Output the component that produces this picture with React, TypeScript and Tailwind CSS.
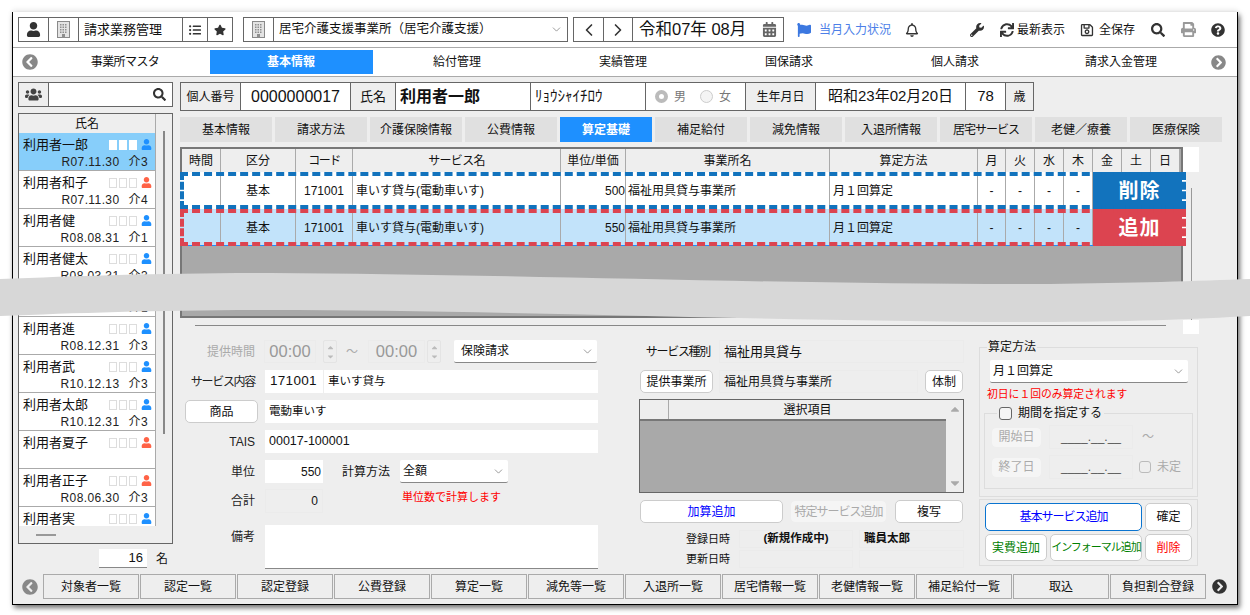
import React from "react";
import {
  FaUser, FaListUl, FaStar, FaUsers, FaSearch,
  FaCalendarAlt, FaFlag, FaRegBell, FaWrench, FaSync, FaRegSave, FaPrint, FaQuestionCircle,
  FaChevronCircleLeft, FaChevronCircleRight, FaCaretUp, FaCaretDown,
} from "react-icons/fa";
import { ChevronDown, ChevronLeft, ChevronRight } from "lucide-react";

const nav = ["事業所マスタ", "基本情報", "給付管理", "実績管理", "国保請求", "個人請求", "請求入金管理"];
const tabs = ["基本情報", "請求方法", "介護保険情報", "公費情報", "算定基礎", "補足給付", "減免情報", "入退所情報", "居宅サービス", "老健／療養", "医療保険"];
const bottom = ["対象者一覧", "認定一覧", "認定登録", "公費登録", "算定一覧", "減免等一覧", "入退所一覧", "居宅情報一覧", "老健情報一覧", "補足給付一覧", "取込", "負担割合登録"];
const cols: [string, string][] = [
  ["時間", "w-[39px]"], ["区分", "w-[75px]"], ["コード", "w-[57px] tracking-[-1.5px]"], ["サービス名", "w-[208px] tracking-[-0.7px]"], ["単位/単価", "w-[65px]"],
  ["事業所名", "w-[204px]"], ["算定方法", "w-[148px]"], ["月", "w-[28px]"], ["火", "w-[29px]"], ["水", "w-[29px]"], ["木", "w-[29px]"],
  ["金", "w-[29px]"], ["土", "w-[29px]"], ["日", "w-[29px]"],
];
type P = { n: string; d: string; k: string; red?: boolean; h?: string; sel?: boolean };
const people: P[] = [
  { n: "利用者一郎", d: "R07.11.30", k: "介3", sel: true },
  { n: "利用者和子", d: "R07.11.30", k: "介4", red: true },
  { n: "利用者健", d: "R08.08.31", k: "介1" },
  { n: "利用者健太", d: "R08.03.31", k: "介3" },
  { n: "", d: "R08.03.31", k: "介1", h: "h-[32px]" },
  { n: "利用者進", d: "R08.12.31", k: "介3" },
  { n: "利用者武", d: "R10.12.13", k: "介3" },
  { n: "利用者太郎", d: "R10.12.31", k: "介3" },
  { n: "利用者夏子", d: "", k: "", red: true },
  { n: "利用者正子", d: "R08.06.30", k: "介3", red: true },
  { n: "利用者実", d: "", k: "" },
];

function Building() {
  return (
    <svg width="13" height="17" viewBox="0 0 13 17">
      <rect x="0.5" y="0.5" width="12" height="16" fill="#e4e4e4" stroke="#8a8a8a" />
      {[3, 5.5, 8, 10.5].map((y) =>
        [3, 5.5, 8].map((x) => <rect key={`${x}-${y}`} x={x} y={y} width="1.5" height="1.5" fill="#8f8f8f" />)
      )}
      <rect x="5" y="13" width="3" height="3.5" fill="#8f8f8f" />
    </svg>
  );
}

function Cell({ w, children, last }: { w: string; children: React.ReactNode; last?: boolean }) {
  return <div className={`${w} h-full flex items-center justify-center shrink-0 ${last ? "" : "border-r border-[#666]"}`}>{children}</div>;
}

function Row({ price, bg, color, label, border, line }: { price: string; bg: string; color: string; label: string; border: string; line?: boolean }) {
  const c = "h-full flex items-center shrink-0 border-r border-[#aaa]";
  return (
    <div className={`relative h-[37px] w-[1006px] flex text-[12px] text-[#111] ${bg}`}>
      <div className={`${c} w-[41px]`} />
      <div className={`${c} w-[75px] justify-center`}>基本</div>
      <div className={`${c} w-[57px] justify-center`}>171001</div>
      <div className={`${c} w-[208px] pl-[3px]`}>車いす貸与(電動車いす)</div>
      <div className={`${c} w-[65px] justify-end`}>{price}</div>
      <div className={`${c} w-[204px] pl-[2px]`}>福祉用具貸与事業所</div>
      <div className={`${c} w-[148px] pl-[3px]`}>月１回算定</div>
      {[28, 29, 29, 29].map((w, i) => (
        <div key={i} className={`${c} justify-center`} style={{ width: w }}>-</div>
      ))}
      {line && <div className="absolute left-0 right-0 bottom-0 h-[1px] bg-[#1e90ff]" />}
      <div className="absolute right-0 top-0 bottom-0 w-[4px] bg-white" />
      <div className={`absolute right-[4px] top-0 bottom-0 w-[89px] flex items-center justify-center text-white font-bold text-[20px] tracking-[1px] pl-[4px] ${color}`}>{label}</div>
      <div className={`absolute inset-0 border-4 border-dashed ${border}`} />
    </div>
  );
}

function Btn({ w, h = "h-full", text = "text-[#111]", cls = "", children }: { w: string; h?: string; text?: string; cls?: string; children: React.ReactNode }) {
  return <div className={`${w} ${h} ${text} ${cls} shrink-0 rounded-[5px] border border-[#ccc] bg-white flex items-center justify-center text-[12px]`}>{children}</div>;
}

function Label({ children, cls = "" }: { children: React.ReactNode; cls?: string }) {
  return <div className={`w-[75px] shrink-0 text-right text-[12px] text-[#222] whitespace-nowrap ${cls}`}>{children}</div>;
}

function Select({ w, text, h = "h-[23px]", pl = "pl-[3px]" }: { w: string; text: string; h?: string; pl?: string }) {
  return (
    <div className={`${w} ${h} ${pl} shrink-0 bg-white border-b border-[#888] rounded-[2px] flex items-center justify-between pr-[3px] text-[12px] text-[#111]`}>
      <span>{text}</span>
      <ChevronDown size={13} strokeWidth={1.2} className="text-[#666]" />
    </div>
  );
}

function Spin() {
  return (
    <div className="w-[14px] h-[23px] shrink-0 border border-[#e4e4e4] rounded-[2px] flex flex-col items-center justify-center text-[#bbb] text-[9px] leading-none">
      <FaCaretUp />
      <FaCaretDown />
    </div>
  );
}

const ro = "bg-[#eeeeee] border border-[#ebebeb]";

export default function App() {
  return (
    <div className="relative w-[1250px] h-[615px] overflow-hidden bg-white pl-[12px] pt-[12px] [font-family:'Liberation_Sans','Noto_Sans_CJK_JP',sans-serif]">
      <div className="w-[1226px] h-[593px] flex flex-col border-x border-b border-black bg-[#eeeeee] shadow-[2px_3px_5px_rgba(0,0,0,0.55),0_-3px_5px_rgba(0,0,0,0.06)]">
        {/* header */}
        <div className="h-[35px] shrink-0 bg-white flex items-start pl-[5px] pt-[5px] text-[#111]">
          <div className="w-[215px] h-[25px] flex border border-[#666]">
            <Cell w="w-[30px]"><FaUser size={15} className="text-[#333]" /></Cell>
            <Cell w="w-[30px]"><Building /></Cell>
            <div className="flex-1 h-full flex items-center pl-[5px] text-[13px] border-r border-[#666]">請求業務管理</div>
            <Cell w="w-[25px]"><FaListUl size={12} className="text-[#333]" /></Cell>
            <Cell w="w-[24px]" last><FaStar size={12} className="text-[#333]" /></Cell>
          </div>
          <div className="ml-[10px] w-[325px] h-[25px] flex border border-[#666]">
            <Cell w="w-[30px]"><Building /></Cell>
            <div className="flex-1 h-full flex items-center justify-between pl-[5px] pr-[4px] text-[12.5px]">
              <span>居宅介護支援事業所（居宅介護支援）</span>
              <ChevronDown size={13} strokeWidth={1.2} className="text-[#666]" />
            </div>
          </div>
          <div className="ml-[5px] w-[211px] h-[25px] flex border border-[#666]">
            <Cell w="w-[30px]"><ChevronLeft size={20} strokeWidth={2} className="text-[#333]" /></Cell>
            <Cell w="w-[29px]"><ChevronRight size={20} strokeWidth={2} className="text-[#333]" /></Cell>
            <div className="flex-1 h-full flex items-center justify-between pl-[6px] pr-[6px]">
              <span className="text-[16.5px] whitespace-pre">令和07年 08月</span>
              <FaCalendarAlt size={15} className="text-[#666]" />
            </div>
          </div>
          <div className="flex items-center h-[25px]">
            <FaFlag size={14} className="ml-[13px] text-[#3c78e0]" />
            <span className="ml-[8px] w-[72px] text-[12px] text-[#4d7fe8] whitespace-nowrap">当月入力状況</span>
            <FaRegBell size={14} className="ml-[14px] text-[#333]" />
            <FaWrench size={14} className="ml-[51px] text-[#333]" />
            <FaSync size={14} className="ml-[16px] text-[#333]" />
            <span className="ml-[3px] w-[48px] text-[12px] whitespace-nowrap">最新表示</span>
            <FaRegSave size={14} className="ml-[15px] text-[#333]" />
            <span className="ml-[5px] w-[36px] text-[12px] whitespace-nowrap">全保存</span>
            <FaSearch size={14} className="ml-[16px] text-[#333]" />
            <FaPrint size={15} className="ml-[16px] text-[#999]" />
            <FaQuestionCircle size={14} className="ml-[15px] text-[#333]" />
          </div>
        </div>
        {/* nav */}
        <div className="h-[30px] shrink-0 bg-white border-y border-[#aaa] flex items-center text-[12px] text-[#111]">
          <FaChevronCircleLeft size={16} className="ml-[9px] text-[#888]" />
          <div className="ml-[4px] flex h-[24px]">
            {nav.map((t, i) => (
              <div key={t} className={`w-[166px] h-full flex items-center justify-center ${t.length === 6 && i === 0 ? "tracking-[-0.6px]" : ""} ${i === 1 ? "bg-[#1e90ff] text-white font-bold mx-[1.5px] !w-[163px]" : ""}`}>{t}</div>
            ))}
          </div>
          <FaChevronCircleRight size={15} className="ml-[7px] text-[#888]" />
        </div>
        {/* main */}
        <div className="flex-1 flex pl-[5px] pt-[5px] text-[12px] text-[#111] min-h-0">
          {/* left */}
          <div className="w-[155px] shrink-0 flex flex-col">
            <div className="h-[25px] flex border border-[#666] bg-white shrink-0">
              <div className="w-[30px] h-full border-r border-[#666] bg-[#eeeeee] flex items-center justify-center"><FaUsers size={17} className="text-[#444]" /></div>
              <div className="flex-1 flex items-center justify-end pr-[6px]"><FaSearch size={13} className="text-[#333]" /></div>
            </div>
            <div className="mt-[6px] h-[431px] flex flex-col border border-[#666] bg-[#eeeeee] shrink-0">
              <div className="flex flex-1 min-h-0">
                <div className="w-[136px] shrink-0 flex flex-col overflow-hidden">
                  <div className="h-[19px] shrink-0 flex items-center justify-center bg-[#eeeeee]">氏名</div>
                  {people.map((p, i) => (
                    <div key={i} className={`${p.h ?? "h-[38px]"} shrink-0 flex flex-col border-b border-[#aaa] ${p.sel ? "bg-[#87cefa]" : "bg-white"} ${p.h ? "justify-end" : ""} pl-[4px] pr-[3px]`}>
                      {p.n && (
                        <div className="h-[23px] flex items-center shrink-0">
                          <span className="text-[13px] whitespace-nowrap flex-1">{p.n}</span>
                          <div className="flex gap-[1.5px] mr-[4px]">
                            {[0, 1, 2].map((k) => (
                              <span key={k} className={`block w-[8.5px] h-[10px] border ${p.sel ? "bg-white border-white" : "border-[#ddd]"}`} />
                            ))}
                          </div>
                          <FaUser size={11} className={p.red ? "text-[#ff6347]" : "text-[#1e90ff]"} />
                        </div>
                      )}
                      {p.d && (
                        <div className="-mt-[2px] flex justify-end pr-[4px] whitespace-pre text-[12px] leading-[16px] tracking-[0.4px] text-[#222]">
                          <span>{p.d}</span>
                          <span className="ml-[9px]">{p.k}</span>
                        </div>
                      )}
                    </div>
                  ))}
                </div>
                <div className="flex-1 border-l border-[#aaa] flex justify-center pt-[17px] pb-[94px]">
                  <div className="w-[2px] h-[303px] bg-[#888]" />
                </div>
              </div>
              <div className="h-[17px] shrink-0 flex items-center pl-[17px]">
                <div className="w-[20px] h-[2px] bg-[#999]" />
              </div>
            </div>
            <div className="mt-[5px] flex items-center shrink-0 pl-[81px]">
              <div className="w-[48px] h-[19px] bg-white border-b border-[#888] flex items-center justify-end pr-[4px] text-[13px]">16</div>
              <span className="ml-[9px] text-[12px]">名</span>
            </div>
          </div>
          {/* right */}
          <div className="ml-[7px] flex-1 flex flex-col min-w-0">
            <div className="h-[29px] w-[854px] shrink-0 flex border border-[#666] bg-white">
              <div className="w-[60px] h-full bg-[#eeeeee] border-r border-[#666] flex items-center justify-center">個人番号</div>
              <div className="w-[110px] h-full border-r border-[#666] flex items-center justify-center text-[16px]">0000000017</div>
              <div className="w-[45px] h-full bg-[#eeeeee] border-r border-[#666] flex items-center justify-center text-[13px]">氏名</div>
              <div className="w-[135px] h-full border-r border-[#666] flex items-center pl-[4px] text-[16px] font-bold">利用者一郎</div>
              <div className="w-[115px] h-full border-r border-[#666] flex items-center pl-[4px] text-[15px]">ﾘｮｳｼｬｲﾁﾛｳ</div>
              <div className="w-[100px] h-full border-r border-[#666] flex items-center pl-[9px] text-[#777]">
                <span className="w-[13px] h-[13px] rounded-full border-[4px] border-[#bbb] bg-white" />
                <span className="ml-[6px]">男</span>
                <span className="ml-[14px] w-[13px] h-[13px] rounded-full border border-[#ccc] bg-[#f4f4f4]" />
                <span className="ml-[6px]">女</span>
              </div>
              <div className="w-[70px] h-full bg-[#eeeeee] border-r border-[#666] flex items-center justify-center">生年月日</div>
              <div className="w-[150px] h-full border-r border-[#666] flex items-center justify-center text-[15px]">昭和23年02月20日</div>
              <div className="w-[40px] h-full border-r border-[#666] flex items-center justify-center text-[15px]">78</div>
              <div className="flex-1 h-full bg-[#eeeeee] flex items-center justify-center">歳</div>
            </div>
            <div className="mt-[6px] h-[25px] shrink-0 flex gap-[3px]">
              {tabs.map((t, i) => (
                <div key={t} className={`w-[92px] h-full flex items-center justify-center whitespace-nowrap ${t === "居宅サービス" ? "tracking-[-1px]" : ""} ${i === 4 ? "bg-[#1e90ff] text-white font-bold" : "bg-[#e0e0e0]"}`}>{t}</div>
              ))}
            </div>
            {/* table block */}
            <div className="mt-[5px] h-[187px] shrink-0 flex">
              <div className="w-[1003px] shrink-0 flex flex-col">
                <div className="h-[171px] border-2 border-[#777] bg-[#a9a9a9] shrink-0">
                  <div className="h-[23px] flex">
                    {cols.map(([t, w]) => (
                      <div key={t} className={`${w} h-full shrink-0 bg-[#eeeeee] border-r border-[#aaa] flex items-center justify-center whitespace-nowrap`}>{t}</div>
                    ))}
                  </div>
                  <div className="relative z-10 -ml-[2px]">
                    <Row price="500" bg="bg-white" color="bg-[#1273bd]" label="削除" border="border-[#1273bd]" />
                    <Row price="550" bg="bg-[#c2e3fa]" color="bg-[#dc4450]" label="追加" border="border-[#dc4450]" line />
                  </div>
                </div>
                <div className="mt-[7px] ml-[15px] w-[971px] h-[1px] bg-[#888] shrink-0" />
              </div>
              <div className="w-[16px] shrink-0 flex flex-col items-center">
                <div className="w-full h-[25px] bg-white shrink-0" />
                <div className="mt-[16px] flex-1 w-[1px] bg-[#999]" />
                <div className="w-full h-[14px] bg-white shrink-0" />
              </div>
            </div>
            {/* form */}
            <div className="mt-[6px] flex-1 flex min-h-0">
              <div className="w-[418px] shrink-0 flex flex-col">
                <div className="h-[23px] flex items-center">
                  <Label cls="text-[#aaa]">提供時間</Label>
                  <div className={`ml-[9px] w-[52px] h-[23px] shrink-0 flex items-center justify-center text-[16.5px] text-[#999] ${ro}`}>00:00</div>
                  <div className="ml-[7px]"><Spin /></div>
                  <span className="ml-[9px] w-[22px] text-[#aaa] text-[12px]">～</span>
                  <div className="w-[57px] h-[23px] shrink-0 flex items-center justify-center text-[16.5px] text-[#999] border border-[#ebebeb]">00:00</div>
                  <div className="ml-[2px]"><Spin /></div>
                  <div className="ml-[13px]"><Select w="w-[143px]" text="保険請求" pl="pl-[7px]" /></div>
                </div>
                <div className="mt-[7px] h-[23px] flex items-center">
                  <Label cls="tracking-[-1.3px]">サービス内容</Label>
                  <div className="ml-[10px] w-[58px] h-full bg-white flex items-center pl-[5px] text-[13.5px] tracking-[0.3px]">171001</div>
                  <div className="ml-[1px] w-[274px] h-full bg-white flex items-center pl-[4px] text-[11.5px]">車いす貸与</div>
                </div>
                <div className="mt-[7px] h-[23px] flex items-center">
                  <div className="ml-[5px]"><Btn w="w-[73px]" h="h-[23px]">商品</Btn></div>
                  <div className="ml-[7px] w-[333px] h-full bg-white flex items-center pl-[4px] text-[11.5px]">電動車いす</div>
                </div>
                <div className="mt-[7px] h-[23px] flex items-center">
                  <Label>TAIS</Label>
                  <div className="ml-[10px] w-[333px] h-full bg-white flex items-center pl-[4px] text-[12.5px]">00017-100001</div>
                </div>
                <div className="mt-[7px] h-[23px] flex items-center">
                  <Label>単位</Label>
                  <div className="ml-[10px] w-[58px] h-full bg-white flex items-center justify-end pr-[2px]">550</div>
                  <div className="ml-[19px] w-[48px] whitespace-nowrap">計算方法</div>
                  <div className="ml-[10px]"><Select w="w-[108px]" text="全額" /></div>
                </div>
                <div className="mt-[6px] h-[24px] flex items-center">
                  <Label>合計</Label>
                  <div className={`ml-[10px] w-[58px] h-full flex items-center justify-end pr-[4px] ${ro}`}>0</div>
                  <div className="ml-[79px] mb-[8px] text-[11px] text-[#ff0000] whitespace-nowrap">単位数で計算します</div>
                </div>
                <div className="mt-[12px] h-[44px] flex">
                  <Label cls="pt-[3px]">備考</Label>
                  <div className="ml-[10px] w-[333px] h-full bg-white border-b border-[#888]" />
                </div>
              </div>
              <div className="ml-[41px] w-[325px] shrink-0 flex flex-col">
                <div className="h-[23px] flex items-center">
                  <div className="w-[71px] text-right whitespace-nowrap tracking-[-1.3px]">サービス種別</div>
                  <div className={`ml-[9px] w-[245px] h-full flex items-center pl-[4px] text-[13px] ${ro}`}>福祉用具貸与</div>
                </div>
                <div className="mt-[7px] h-[23px] flex items-center">
                  <div className="ml-[1px]"><Btn w="w-[73px]" h="h-[23px]">提供事業所</Btn></div>
                  <div className={`ml-[6px] w-[199px] h-full flex items-center pl-[4px] ${ro}`}>福祉用具貸与事業所</div>
                  <div className="ml-[7px]"><Btn w="w-[38px]" h="h-[23px]">体制</Btn></div>
                </div>
                <div className="mt-[6px] h-[94px] flex border border-[#666] bg-[#a9a9a9]">
                  <div className="flex-1 flex flex-col">
                    <div className="h-[21px] flex bg-[#eeeeee] border-b-2 border-[#777]">
                      <div className="w-[29px] border-r border-[#aaa]" />
                      <div className="flex-1 flex items-center justify-center">選択項目</div>
                    </div>
                  </div>
                  <div className="w-[17px] bg-[#eeeeee] flex flex-col items-center justify-between py-[2px] text-[#aaa] text-[14px]">
                    <FaCaretUp />
                    <FaCaretDown />
                  </div>
                </div>
                <div className="mt-[7px] h-[23px] flex items-center">
                  <div className="ml-[1px]"><Btn w="w-[143px]" h="h-[23px]" text="text-[#0000ff]">加算追加</Btn></div>
                  <div className="ml-[7px]"><Btn w="w-[97px]" h="h-[23px]" text="text-[#aaa]" cls="!bg-[#f5f5f5] !border-[#eee] tracking-[-1px] whitespace-nowrap">特定サービス追加</Btn></div>
                  <div className="ml-[8px]"><Btn w="w-[68px]" h="h-[23px]">複写</Btn></div>
                </div>
                <div className="mt-[7px] h-[18px] flex items-center">
                  <div className="w-[91px] text-right text-[11px]">登録日時</div>
                  <div className={`ml-[9px] w-[114px] h-full flex items-center justify-center font-bold text-[11.5px] ${ro}`}>(新規作成中)</div>
                  <div className={`ml-[6px] w-[105px] h-full flex items-center pl-[4px] font-bold text-[11.5px] ${ro}`}>職員太郎</div>
                </div>
                <div className="mt-[2px] h-[18px] flex items-center">
                  <div className="w-[91px] text-right text-[11px]">更新日時</div>
                  <div className={`ml-[9px] w-[114px] h-full ${ro}`} />
                  <div className={`ml-[6px] w-[105px] h-full ${ro}`} />
                </div>
              </div>
              <div className="ml-[15px] w-[219px] shrink-0 flex flex-col">
                <fieldset className="border border-[#ddd] h-[157px] shrink-0">
                  <legend className="ml-[7px] px-[1px] text-[12px] leading-[14px]">算定方法</legend>
                  <div className="mt-[6px] ml-[10px]"><Select w="w-[198px]" text="月１回算定" /></div>
                  <div className="ml-[7px] h-[22px] flex items-center text-[#ff0000] text-[10.8px] whitespace-nowrap">初日に１回のみ算定されます</div>
                  <fieldset className="ml-[4px] w-[209px] h-[84px] border border-[#ddd]">
                    <legend className="ml-[12px] px-[2px] flex items-center h-[16px]">
                      <span className="w-[13px] h-[13px] rounded-[3px] border border-[#666] bg-[#f5f5f5]" />
                      <span className="ml-[6px]">期間を指定する</span>
                    </legend>
                    <div className="mt-[4px] flex items-center ml-[6px] h-[24px]">
                      <Btn w="w-[51px]" h="h-[21px]" text="text-[#aaa]" cls="!bg-[#f5f5f5] !border-[#eee]">開始日</Btn>
                      <div className={`ml-[7px] w-[84px] h-full flex items-center justify-center text-[#555] ${ro}`}>____.__.__</div>
                      <span className="ml-[9px] text-[#aaa] text-[12px]">～</span>
                    </div>
                    <div className="mt-[6px] flex items-center ml-[6px] h-[24px]">
                      <Btn w="w-[51px]" h="h-[21px]" text="text-[#aaa]" cls="!bg-[#f5f5f5] !border-[#eee]">終了日</Btn>
                      <div className={`ml-[7px] w-[84px] h-full flex items-center justify-center text-[#555] ${ro}`}>____.__.__</div>
                      <span className="ml-[6px] w-[12px] h-[12px] rounded-[3px] border border-[#bbb]" />
                      <span className="ml-[6px] text-[#aaa]">未定</span>
                    </div>
                  </fieldset>
                </fieldset>
                <div className="mt-[2px] h-[67px] border border-[#ddd] pl-[5px] pt-[3px] shrink-0">
                  <div className="flex h-[28px] gap-[3px]">
                    <Btn w="w-[157px]" text="text-[#0000ff]" cls="!border-[#0a74d0] tracking-[-1px]">基本サービス追加</Btn>
                    <Btn w="w-[47px]">確定</Btn>
                  </div>
                  <div className="mt-[3px] flex h-[27px] gap-[3px]">
                    <Btn w="w-[62px]" text="text-[#008000]">実費追加</Btn>
                    <Btn w="w-[92px]" text="text-[#008000]" cls="tracking-[-1px] !text-[11px] whitespace-nowrap">インフォーマル追加</Btn>
                    <Btn w="w-[47px]" text="text-[#ff0000]">削除</Btn>
                  </div>
                </div>
              </div>
            </div>
          </div>
        </div>
        {/* bottom */}
        <div className="h-[25px] mb-[5px] shrink-0 flex items-center text-[12px] text-[#111]">
          <FaChevronCircleLeft size={16} className="ml-[9px] text-[#888]" />
          <div className="ml-[5px] flex gap-[1px] h-full">
            {bottom.map((t) => (
              <div key={t} className="w-[96px] h-full border border-[#aaa] flex items-center justify-center">{t}</div>
            ))}
          </div>
          <FaChevronCircleRight size={15} className="ml-[6px] text-[#333]" />
        </div>
      </div>
      {/* torn-paper break across the screenshot */}
      <svg className="absolute left-0 top-0 z-20 pointer-events-none" width="1250" height="615" viewBox="0 0 1250 615">
        <path d="M0 279 C80 276 160 273 270 273 C500 274 800 285 1050 284 C1130 283 1200 281 1250 279 L1250 316 C1200 319 1120 322 1040 322 C800 322 500 310 270 310 C160 310 80 313 0 316 Z" fill="#d7d7d7" />
      </svg>
    </div>
  );
}
